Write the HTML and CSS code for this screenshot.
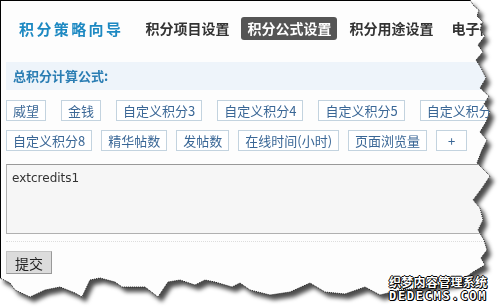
FILE: index.html
```html
<!DOCTYPE html>
<html lang="zh-CN">
<head>
    <meta charset="UTF-8">
    <title>积分策略向导</title>
    <link rel="stylesheet" href="styles.css">
</head>
<body>

    <div class="sheet">
        <div class="paper">
            <!-- Wizard tabs -->
            <div class="nav">
                <span class="brand">积分策略向导</span>
                <span class="tab">积分项目设置</span>
                <span class="tab active">积分公式设置</span>
                <span class="tab">积分用途设置</span>
                <span class="tab">电子商务设置</span>
            </div>

            <div class="formula-head">总积分计算公式:</div>

            <div class="btn-row first">
                <span class="item">威望</span>
                <span class="item">金钱</span>
                <span class="item">自定义积分3</span>
                <span class="item">自定义积分4</span>
                <span class="item">自定义积分5</span>
                <span class="item">自定义积分6</span>
            </div>
            <div class="btn-row">
                <span class="item">自定义积分8</span>
                <span class="item">精华帖数</span>
                <span class="item">发帖数</span>
                <span class="item">在线时间(小时)</span>
                <span class="item">页面浏览量</span>
                <span class="item plus">+</span>
            </div>

            <div class="formula-box">extcredits1</div>

            <div class="divider"></div>

            <button class="submit" type="button">提交</button>
        </div>
    </div>

    <!-- torn edge outline -->
    <svg class="edge" width="500" height="307" viewBox="0 0 500 307">
        <polyline points="470,0 474,6 479,10 477,16 483,22 480,30 485,36 478,45 483,52 476,60 481,68 486,78 480,88 489,96 484,104 490,112 486,122 480,132 487,140 482,150 477,163 484,170 490,176 482,188 473,200 480,208 483,220 478,230 484,240 487,250 481,258 485,265 473,272 465,278 455,283 440,285 420,288 400,290 380,295 365,287 345,294 325,292 310,283 290,292 270,295 250,290 240,283 232,287 215,282 205,280 195,285 180,280 168,282 158,297 145,287 122,287 115,282 100,278 90,280 82,297 75,293 60,287 45,290 30,297 15,290 10,283 0,278"
                  fill="none" stroke="#222" stroke-width="1" stroke-dasharray="1 1"/>
    </svg>

    <div class="watermark">
        <div class="wm-cn">织梦内容管理系统</div>
        <div class="wm-en">DEDECMS.COM</div>
    </div>

</body>
</html>
```

FILE: styles.css
```css
/* General Styles */
body {
    margin: 0;
    width: 500px;
    height: 307px;
    background-color: #fff;
    font-family: "Noto Sans CJK SC", sans-serif;
    position: relative;
    overflow: hidden;
}

.sheet {
    width: 500px;
    height: 307px;
    filter: drop-shadow(4px 5px 2px rgba(0, 0, 0, 0.7));
}

.paper {
    width: 500px;
    height: 307px;
    box-sizing: border-box;
    background-color: #fdfdfd;
    border-top: 1px solid #000;
    border-left: 1px solid #000;
    overflow: hidden;
    clip-path: polygon(0 0, 470px 0, 474px 6px, 479px 10px, 477px 16px, 483px 22px, 480px 30px, 485px 36px, 478px 45px, 483px 52px, 476px 60px, 481px 68px, 486px 78px, 480px 88px, 489px 96px, 484px 104px, 490px 112px, 486px 122px, 480px 132px, 487px 140px, 482px 150px, 477px 163px, 484px 170px, 490px 176px, 482px 188px, 473px 200px, 480px 208px, 483px 220px, 478px 230px, 484px 240px, 487px 250px, 481px 258px, 485px 265px, 473px 272px, 465px 278px, 455px 283px, 440px 285px, 420px 288px, 400px 290px, 380px 295px, 365px 287px, 345px 294px, 325px 292px, 310px 283px, 290px 292px, 270px 295px, 250px 290px, 240px 283px, 232px 287px, 215px 282px, 205px 280px, 195px 285px, 180px 280px, 168px 282px, 158px 297px, 145px 287px, 122px 287px, 115px 282px, 100px 278px, 90px 280px, 82px 297px, 75px 293px, 60px 287px, 45px 290px, 30px 297px, 15px 290px, 10px 283px, 0 278px);
}

/* Tabs */
.nav {
    display: flex;
    align-items: center;
    height: 23px;
    padding: 16px 0 0 18px;
    white-space: nowrap;
}

.brand {
    font-size: 15px;
    font-weight: bold;
    color: #1d89c2;
    letter-spacing: 2.4px;
    margin-right: 16px;
}

.tab {
    font-size: 14px;
    font-weight: bold;
    color: #333;
    padding: 0 6px;
    margin-right: 6px;
    line-height: 23px;
    border-radius: 3px;
}

.tab.active {
    background-color: #555;
    color: #fff;
}

/* Formula */
.formula-head {
    margin: 22px 0 0 5px;
    height: 28px;
    line-height: 28px;
    padding-left: 7px;
    background-color: #eef4fa;
    font-size: 13px;
    font-weight: bold;
    color: #2a7db3;
}

.btn-row {
    display: flex;
    gap: 9px;
    margin: 9px 0 0 5px;
    white-space: nowrap;
}

.btn-row.first {
    gap: 15px;
    margin-top: 10px;
}

.item {
    display: block;
    height: 19px;
    line-height: 19px;
    padding: 0 6px;
    border: 1px solid #c3d3df;
    background-color: #fff;
    font-size: 13px;
    color: #3a6796;
}

.item.plus {
    padding: 0 11px;
}

.formula-box {
    margin: 13px 0 0 5px;
    height: 56px;
    padding: 6px 5px;
    border: 1px solid #b0b0b0;
    border-top-color: #999;
    background-color: #f6f6f6;
    font-family: "DejaVu Sans", sans-serif;
    font-size: 12px;
    color: #333;
}

.divider {
    margin: 7px 0 0 5px;
    border-top: 1px dotted #ddd;
}

.submit {
    display: block;
    margin: 9px 0 0 5px;
    width: 46px;
    height: 23px;
    padding: 0;
    background-color: #dcdcdc;
    border: 1px solid #c4c4c4;
    border-right-color: #999;
    border-bottom-color: #999;
    font-family: "Noto Sans CJK SC", sans-serif;
    font-size: 14px;
    color: #222;
}

/* Overlays */
.edge {
    position: absolute;
    left: 0;
    top: 0;
}

.watermark {
    position: absolute;
    left: 389px;
    top: 274px;
    color: #fff;
    font-weight: bold;
    text-shadow: 1px 0 0 #000, -1px 0 0 #000, 0 1px 0 #000, 0 -1px 0 #000, 1px 1px 0 #000;
}

.wm-cn {
    font-size: 12px;
    line-height: 16px;
    letter-spacing: 0.3px;
}

.wm-en {
    font-family: "DejaVu Sans Mono", monospace;
    font-size: 12px;
    line-height: 12px;
    letter-spacing: 1.7px;
}
```
